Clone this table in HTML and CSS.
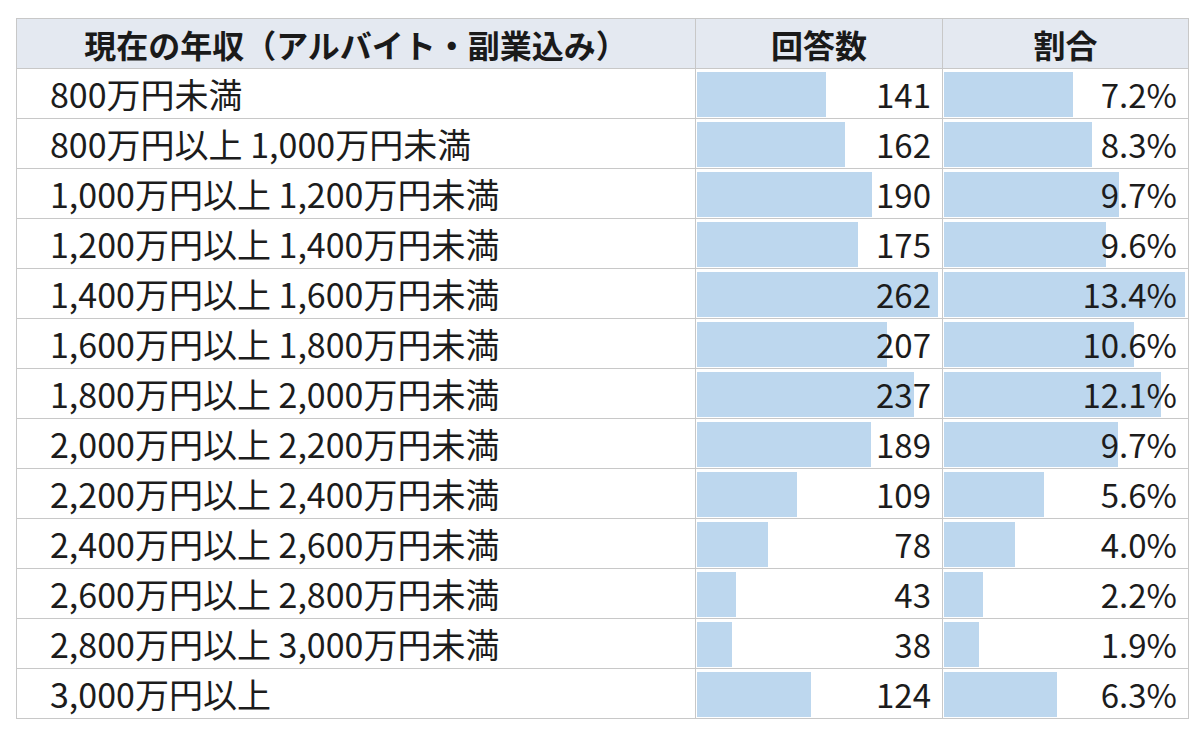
FILE: index.html
```html
<!DOCTYPE html>
<html lang="ja">
<head>
<meta charset="utf-8">
<title>現在の年収</title>
<link rel="stylesheet" href="styles.css">
</head>
<body>
<table class="income">
  <colgroup>
    <col class="c-label">
    <col class="c-count">
    <col class="c-rate">
  </colgroup>
  <thead>
    <tr>
      <th>現在の年収（アルバイト・副業込み）</th>
      <th>回答数</th>
      <th>割合</th>
    </tr>
  </thead>
  <tbody>
    <tr><td class="label">800万円未満</td><td class="val"><div class="cell"><div class="bar" style="width:129px"></div><span class="num">141</span></div></td><td class="val"><div class="cell"><div class="bar" style="width:129px"></div><span class="num">7.2%</span></div></td></tr>
    <tr><td class="label">800万円以上 1,000万円未満</td><td class="val"><div class="cell"><div class="bar" style="width:148px"></div><span class="num">162</span></div></td><td class="val"><div class="cell"><div class="bar" style="width:148px"></div><span class="num">8.3%</span></div></td></tr>
    <tr><td class="label">1,000万円以上 1,200万円未満</td><td class="val"><div class="cell"><div class="bar" style="width:175px"></div><span class="num">190</span></div></td><td class="val"><div class="cell"><div class="bar" style="width:175px"></div><span class="num">9.7%</span></div></td></tr>
    <tr><td class="label">1,200万円以上 1,400万円未満</td><td class="val"><div class="cell"><div class="bar" style="width:161px"></div><span class="num">175</span></div></td><td class="val"><div class="cell"><div class="bar" style="width:162px"></div><span class="num">9.6%</span></div></td></tr>
    <tr><td class="label">1,400万円以上 1,600万円未満</td><td class="val"><div class="cell"><div class="bar" style="width:241px"></div><span class="num">262</span></div></td><td class="val"><div class="cell"><div class="bar" style="width:241px"></div><span class="num">13.4%</span></div></td></tr>
    <tr><td class="label">1,600万円以上 1,800万円未満</td><td class="val"><div class="cell"><div class="bar" style="width:190px"></div><span class="num">207</span></div></td><td class="val"><div class="cell"><div class="bar" style="width:190px"></div><span class="num">10.6%</span></div></td></tr>
    <tr><td class="label">1,800万円以上 2,000万円未満</td><td class="val"><div class="cell"><div class="bar" style="width:217px"></div><span class="num">237</span></div></td><td class="val"><div class="cell"><div class="bar" style="width:217px"></div><span class="num">12.1%</span></div></td></tr>
    <tr><td class="label">2,000万円以上 2,200万円未満</td><td class="val"><div class="cell"><div class="bar" style="width:174px"></div><span class="num">189</span></div></td><td class="val"><div class="cell"><div class="bar" style="width:174px"></div><span class="num">9.7%</span></div></td></tr>
    <tr><td class="label">2,200万円以上 2,400万円未満</td><td class="val"><div class="cell"><div class="bar" style="width:100px"></div><span class="num">109</span></div></td><td class="val"><div class="cell"><div class="bar" style="width:100px"></div><span class="num">5.6%</span></div></td></tr>
    <tr><td class="label">2,400万円以上 2,600万円未満</td><td class="val"><div class="cell"><div class="bar" style="width:71px"></div><span class="num">78</span></div></td><td class="val"><div class="cell"><div class="bar" style="width:71px"></div><span class="num">4.0%</span></div></td></tr>
    <tr><td class="label">2,600万円以上 2,800万円未満</td><td class="val"><div class="cell"><div class="bar" style="width:39px"></div><span class="num">43</span></div></td><td class="val"><div class="cell"><div class="bar" style="width:39px"></div><span class="num">2.2%</span></div></td></tr>
    <tr><td class="label">2,800万円以上 3,000万円未満</td><td class="val"><div class="cell"><div class="bar" style="width:35px"></div><span class="num">38</span></div></td><td class="val"><div class="cell"><div class="bar" style="width:35px"></div><span class="num">1.9%</span></div></td></tr>
    <tr><td class="label">3,000万円以上</td><td class="val"><div class="cell"><div class="bar" style="width:114px"></div><span class="num">124</span></div></td><td class="val"><div class="cell"><div class="bar" style="width:113px"></div><span class="num">6.3%</span></div></td></tr>
  </tbody>
</table>
</body>
</html>
```

FILE: styles.css
```css
html, body {
  margin: 0;
  background: #ffffff;
}

body {
  padding: 18px 0 0 16px;
  font-family: "Noto Sans CJK JP", "Noto Sans", sans-serif;
  color: #1c1c1c;
}

.income {
  border-collapse: collapse;
  table-layout: fixed;
  width: 1172px;
}

.c-label { width: 679px; }
.c-count { width: 247px; }
.c-rate { width: 246px; }

.income th,
.income td {
  border: 1px solid #c8c8c8;
  padding: 0;
}

.income thead tr {
  height: 50px;
}

.income th {
  background: #e4e9f1;
  font-size: 32px;
  font-weight: 700;
  line-height: 1;
  text-align: center;
  vertical-align: middle;
  color: #1a1a1a;
}

.income tbody tr {
  height: 50px;
}

.income .label {
  padding-left: 33px;
  font-size: 34px;
  line-height: 1;
  white-space: nowrap;
  vertical-align: middle;
}

.income .val {
  vertical-align: top;
}

.cell {
  display: grid;
  height: 45px;
  margin: 3px 0 1px 1px;
}

.bar {
  grid-area: 1 / 1;
  justify-self: start;
  height: 100%;
  background: #bdd7ee;
}

.num {
  grid-area: 1 / 1;
  justify-self: end;
  align-self: center;
  padding-right: 11px;
  font-size: 33px;
  line-height: 1;
  position: relative;
}
```
